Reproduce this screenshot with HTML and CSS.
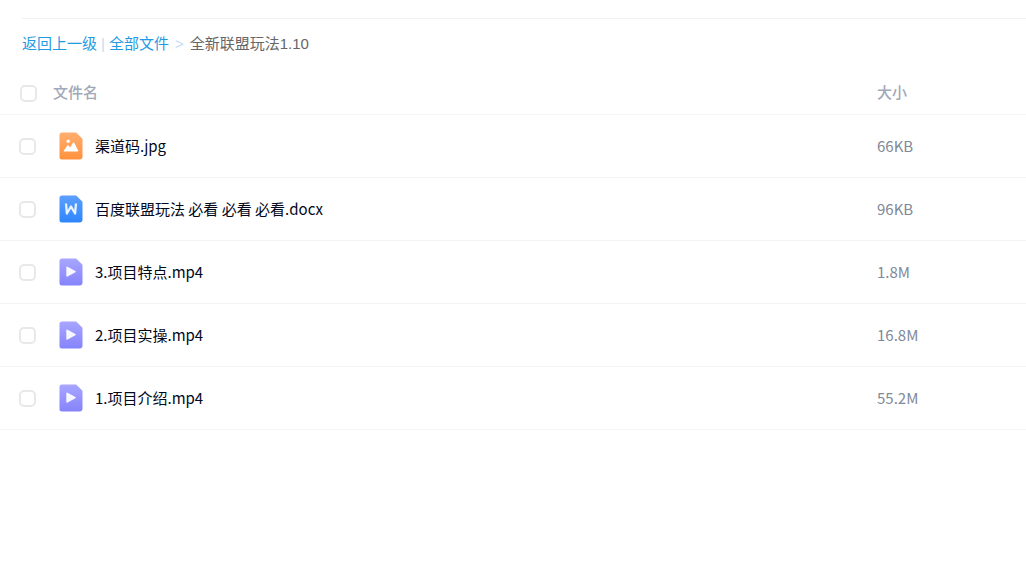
FILE: index.html
```
<!DOCTYPE html>
<html lang="zh-CN">
<head>
    <meta charset="UTF-8">
    <meta name="viewport" content="width=device-width, initial-scale=1.0">
    <title>全新联盟玩法1.10</title>
    <link rel="stylesheet" href="styles.css">
</head>
<body>
<!-- Icon definitions -->
<svg class="icon-defs" width="0" height="0" aria-hidden="true">
    <defs>
        <linearGradient id="orange" x1="0" y1="0" x2="0" y2="1">
            <stop offset="0" stop-color="#ffae70"/>
            <stop offset="1" stop-color="#ff913d"/>
        </linearGradient>
        <linearGradient id="blue" x1="0" y1="0" x2="0" y2="1">
            <stop offset="0" stop-color="#5c9fff"/>
            <stop offset="1" stop-color="#2e86fb"/>
        </linearGradient>
        <linearGradient id="purple" x1="0" y1="0" x2="0" y2="1">
            <stop offset="0" stop-color="#a8a6ff"/>
            <stop offset="1" stop-color="#8583fb"/>
        </linearGradient>
        <symbol id="icon-image" viewBox="0 0 24 28">
            <path fill="url(#orange)" d="M3 .5h14.2L23.5 6.8V24.5a3 3 0 0 1-3 3H3a2.5 2.5 0 0 1-2.5-2.5V3A2.5 2.5 0 0 1 3 .5z"/>
            <circle cx="9.2" cy="9.2" r="1.7" fill="#fff"/>
            <path fill="#fff" d="M4.800 18.500l3.600-4.900q.6-.8 1.200 0l1.500 2 2.900-4.900q.6-.9 1.200 0l4 7.800q.3 1-.7 1H5.400q-1-.1-.6-1z"/>
        </symbol>
        <symbol id="icon-doc" viewBox="0 0 24 28">
            <path fill="url(#blue)" d="M3 .5h14.2L23.5 6.8V24.5a3 3 0 0 1-3 3H3a2.5 2.5 0 0 1-2.500-2.5V3A2.5 2.5 0 0 1 3 .5z"/>
            <path fill="none" stroke="#e9f3ff" stroke-width="2.3" stroke-linejoin="round" d="M7 8.500l.9 10L12 11.500l4.100 7 .9-10"/>
        </symbol>
        <symbol id="icon-video" viewBox="0 0 24 28">
            <path fill="url(#purple)" d="M3 .5h14.2L23.5 6.8V24.5a3 3 0 0 1-3 3H3a2.5 2.5 0 0 1-2.5-2.5V3A2.5 2.5 0 0 1 3 .5z"/>
            <path fill="#f7f7ff" d="M7.300 9.500q0-1.400 1.300-.8l7.800 4.200q1 .7 0 1.400l-7.800 4.200q-1.300.6-1.300-.8z"/>
        </symbol>
    </defs>
</svg>

<nav class="breadcrumb">
    <a href="#">返回上一级</a>
    <span class="divider">|</span>
    <a href="#">全部文件</a>
    <span class="arrow">&gt;</span>
    <span class="current">全新联盟玩法1.10</span>
</nav>

<table class="file-table">
    <thead>
        <tr>
            <th class="col-check"><input type="checkbox" class="checkbox" id="check-all" aria-label="全选"></th>
            <th class="col-name">文件名</th>
            <th class="col-size">大小</th>
        </tr>
    </thead>
    <tbody>
        <tr>
            <td class="col-check"><input type="checkbox" class="checkbox" id="file-1"></td>
            <td class="col-name">
                <label class="file" for="file-1"><svg class="file-icon" aria-hidden="true"><use href="#icon-image"/></svg>渠道码.jpg</label>
            </td>
            <td class="col-size">66KB</td>
        </tr>
        <tr>
            <td class="col-check"><input type="checkbox" class="checkbox" id="file-2"></td>
            <td class="col-name">
                <label class="file" for="file-2"><svg class="file-icon" aria-hidden="true"><use href="#icon-doc"/></svg>百度联盟玩法 必看 必看 必看.docx</label>
            </td>
            <td class="col-size">96KB</td>
        </tr>
        <tr>
            <td class="col-check"><input type="checkbox" class="checkbox" id="file-3"></td>
            <td class="col-name">
                <label class="file" for="file-3"><svg class="file-icon" aria-hidden="true"><use href="#icon-video"/></svg>3.项目特点.mp4</label>
            </td>
            <td class="col-size">1.8M</td>
        </tr>
        <tr>
            <td class="col-check"><input type="checkbox" class="checkbox" id="file-4"></td>
            <td class="col-name">
                <label class="file" for="file-4"><svg class="file-icon" aria-hidden="true"><use href="#icon-video"/></svg>2.项目实操.mp4</label>
            </td>
            <td class="col-size">16.8M</td>
        </tr>
        <tr>
            <td class="col-check"><input type="checkbox" class="checkbox" id="file-5"></td>
            <td class="col-name">
                <label class="file" for="file-5"><svg class="file-icon" aria-hidden="true"><use href="#icon-video"/></svg>1.项目介绍.mp4</label>
            </td>
            <td class="col-size">55.2M</td>
        </tr>
    </tbody>
</table>

<script src="script.js"></script>
</body>
</html>
```

FILE: styles.css
```
body {
    margin: 0;
    padding-top: 18px;
    background-color: #fff;
    font-family: "Noto Sans CJK SC", sans-serif;
    font-size: 15px;
    line-height: 24px;
    color: #03081a;
}

.icon-defs {
    position: absolute;
}

.breadcrumb {
    display: flex;
    align-items: center;
    margin-left: 22px;
    padding: 13px 0;
    border-top: 1px solid #f2f2f4;
    font-family: "Liberation Sans", "Noto Sans CJK SC", sans-serif;
}

.breadcrumb a {
    color: #1f9be3;
    text-decoration: none;
}

.breadcrumb a:hover {
    text-decoration: underline;
}

.breadcrumb .divider {
    margin: 0 4px;
    color: #c4dbf5;
}

.breadcrumb .arrow {
    margin: 0 6px;
    color: #c4dbf5;
}

.breadcrumb .current {
    color: #666;
}

.file-table {
    width: 100%;
    table-layout: fixed;
    border-collapse: separate;
    border-spacing: 0;
}

.file-table th,
.file-table td {
    padding: 0;
    border-bottom: 1px solid #f3f4f6;
    text-align: left;
    vertical-align: middle;
}

.file-table th {
    height: 45px;
    font-weight: 500;
    color: #a1a8b8;
}

.file-table td {
    height: 62px;
}

.file-table .col-check {
    width: 53px;
    line-height: 0;
}

.file-table th.col-check {
    padding-top: 4px;
    height: 41px;
}

.file-table .col-size {
    width: 149px;
}

.file-table td.col-size {
    color: #818999;
}

.checkbox {
    appearance: none;
    box-sizing: border-box;
    width: 17px;
    height: 17px;
    margin: 0 0 0 19px;
    border: 2px solid #e8e8ea;
    border-radius: 5px;
    background-color: #fff;
    cursor: pointer;
}

th .checkbox {
    margin-left: 20px;
}

.checkbox:checked {
    border-color: #1f9be3;
    background-color: #1f9be3;
}

.file {
    display: flex;
    align-items: center;
    gap: 12px;
    padding-left: 6px;
}

.file-icon {
    flex-shrink: 0;
    width: 24px;
    height: 28px;
}
```

FILE: script.js
```
const checkAll = document.getElementById('check-all');
const fileChecks = document.querySelectorAll('tbody .checkbox');

// Select or clear every file
checkAll.addEventListener('change', () => {
    fileChecks.forEach(box => {
        box.checked = checkAll.checked;
    });
});

fileChecks.forEach(box => {
    box.addEventListener('change', () => {
        checkAll.checked = [...fileChecks].every(item => item.checked);
    });
});
```
